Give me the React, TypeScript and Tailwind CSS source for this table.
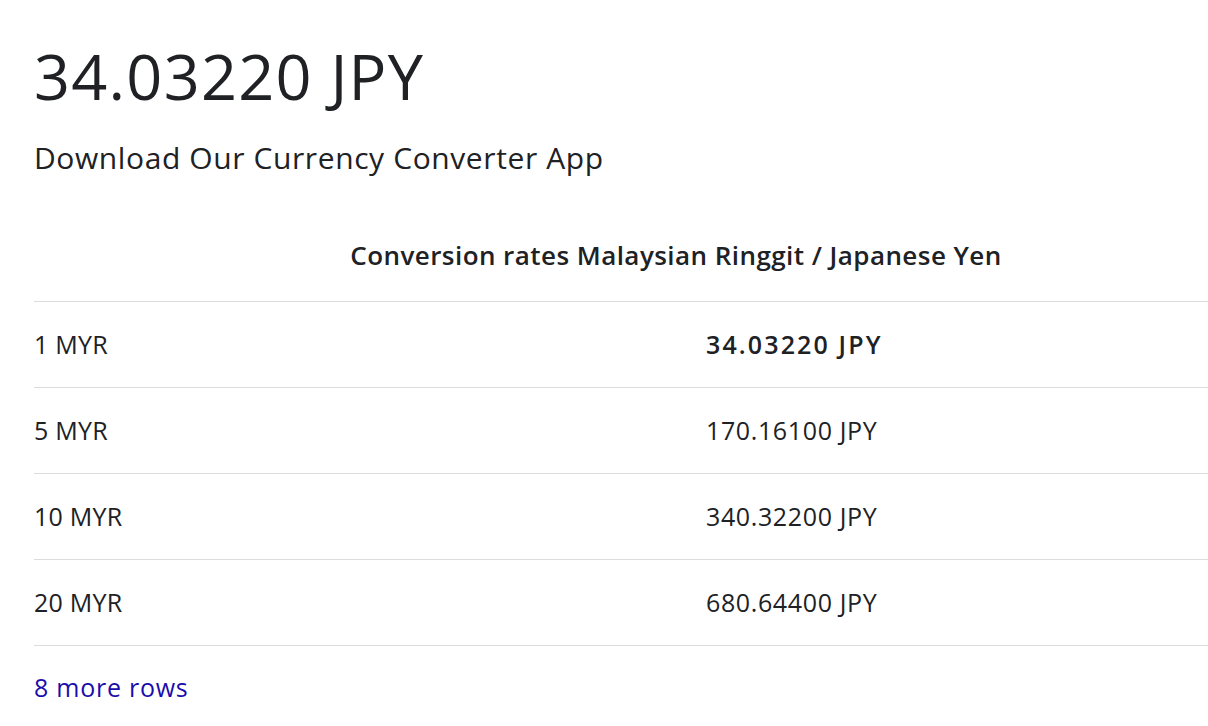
const rows = [
  { from: '1 MYR', to: '34.03220 JPY', bold: true },
  { from: '5 MYR', to: '170.16100 JPY' },
  { from: '10 MYR', to: '340.32200 JPY' },
  { from: '20 MYR', to: '680.64400 JPY' },
];

export default function App() {
  return (
    <div className="w-full min-h-[726px] overflow-hidden bg-white font-['Open_Sans',sans-serif] text-[#202124]">
      <div className="pl-[34px]">
        <div className="pt-[44px] text-[63px] leading-[63px] tracking-[0.02em] whitespace-nowrap">34.03220 JPY</div>
        <div className="mt-[36px] text-[30px] leading-[30px] tracking-[0.02em] whitespace-nowrap">
          Download Our Currency Converter App
        </div>

        <div className="mt-[37px] w-[1284px]">
          <div className="h-[92px] flex items-center justify-center border-b border-[#dadce0] text-[26px] font-semibold tracking-[0.017em] whitespace-nowrap">
            Conversion rates Malaysian Ringgit / Japanese Yen
          </div>
          {rows.map(r => (
            <div
              key={r.from}
              className="grid grid-cols-[672px_612px] h-[86px] items-center border-b border-[#dadce0] text-[25px] whitespace-nowrap"
            >
              <span className="tracking-[0.01em]">{r.from}</span>
              <span className={r.bold ? 'font-semibold tracking-[0.085em]' : 'tracking-[0.025em]'}>{r.to}</span>
            </div>
          ))}
        </div>

        <a href="#" className="block pt-[26px] text-[25px] leading-[30px] tracking-[0.03em] text-[#1a0dab] whitespace-nowrap">
          8 more rows
        </a>
      </div>
    </div>
  );
}
